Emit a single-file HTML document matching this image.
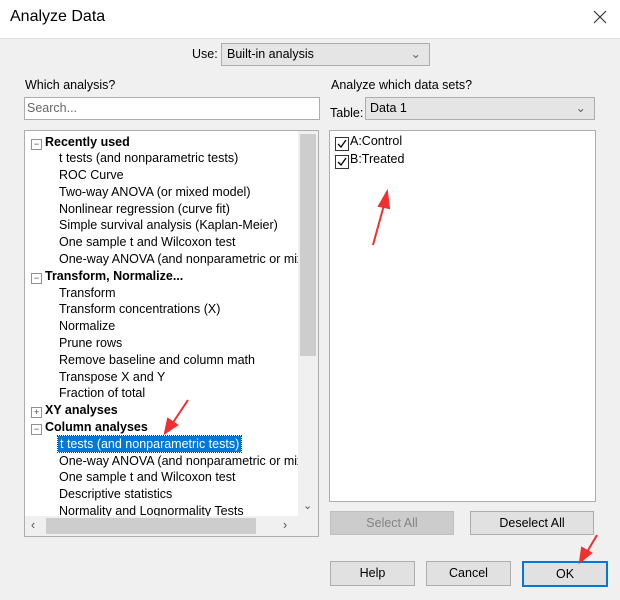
<!DOCTYPE html><html><head><style>
body{margin:0;width:620px;height:600px;background:#f0f0f0;font-family:"Liberation Sans",sans-serif;font-size:12.5px;color:#000;position:relative;overflow:hidden}
.a{position:absolute}
.title{left:0;top:0;width:620px;height:38px;background:#fff;border-bottom:1px solid #e0e0e0}
.box{background:#fff;border:1px solid #adadad}
.combo{background:#e5e5e5;border:1px solid #adadad}
.btn{background:#e1e1e1;border:1px solid #adadad;text-align:center;line-height:22px}
.it{position:absolute;left:34px;white-space:nowrap;line-height:16px}
.h{left:20px;font-weight:bold}
.pm{position:absolute;left:6px;width:9px;height:9px;border:1px solid #919191;background:#fff;font-size:9px;line-height:8px;text-align:center;color:#444}
</style></head><body>
<div class="a title"></div>
<div class="a" style="left:10px;top:8px;font-size:16px">Analyze Data</div>
<svg class="a" style="left:592px;top:9px" width="16" height="16"><path d="M2 2L14 14M14 2L2 14" stroke="#333" stroke-width="1.2"/></svg>
<div class="a" style="left:192px;top:47px">Use:</div>
<div class="a combo" style="left:221px;top:43px;width:207px;height:21px"><span style="position:absolute;left:5px;top:3px">Built-in analysis</span><span style="position:absolute;right:8px;top:2px;color:#666">&#8964;</span></div>
<div class="a" style="left:25px;top:78px">Which analysis?</div>
<div class="a box" style="left:24px;top:97px;width:294px;height:21px"><span style="position:absolute;left:2px;top:3px;color:#666">Search...</span></div>
<div class="a" style="left:331px;top:78px">Analyze which data sets?</div>
<div class="a" style="left:330px;top:106px">Table:</div>
<div class="a combo" style="left:365px;top:97px;width:228px;height:21px"><span style="position:absolute;left:4px;top:3px">Data 1</span><span style="position:absolute;right:8px;top:2px;color:#666">&#8964;</span></div>
<div class="a box" style="left:24px;top:130px;width:293px;height:405px;overflow:hidden">
<div class="pm" style="top:8px">−</div><div class="it h" style="top:3px">Recently used</div>
<div class="it" style="top:19px">t tests (and nonparametric tests)</div>
<div class="it" style="top:36px">ROC Curve</div>
<div class="it" style="top:53px">Two-way ANOVA (or mixed model)</div>
<div class="it" style="top:70px">Nonlinear regression (curve fit)</div>
<div class="it" style="top:86px">Simple survival analysis (Kaplan-Meier)</div>
<div class="it" style="top:103px">One sample t and Wilcoxon test</div>
<div class="it" style="top:120px">One-way ANOVA (and nonparametric or mixed)</div>
<div class="pm" style="top:142px">−</div><div class="it h" style="top:137px">Transform, Normalize...</div>
<div class="it" style="top:154px">Transform</div>
<div class="it" style="top:170px">Transform concentrations (X)</div>
<div class="it" style="top:187px">Normalize</div>
<div class="it" style="top:204px">Prune rows</div>
<div class="it" style="top:221px">Remove baseline and column math</div>
<div class="it" style="top:238px">Transpose X and Y</div>
<div class="it" style="top:254px">Fraction of total</div>
<div class="pm" style="top:276px">+</div><div class="it h" style="top:271px">XY analyses</div>
<div class="pm" style="top:293px">−</div><div class="it h" style="top:288px">Column analyses</div>
<div class="it" style="top:305px;left:33px;background:#0078d7;color:#fff;padding:0 2px;outline:1px dotted #333">t tests (and nonparametric tests)</div>
<div class="it" style="top:322px">One-way ANOVA (and nonparametric or mixed)</div>
<div class="it" style="top:338px">One sample t and Wilcoxon test</div>
<div class="it" style="top:355px">Descriptive statistics</div>
<div class="it" style="top:372px">Normality and Lognormality Tests</div>
<div class="a" style="left:273px;top:0;width:20px;height:386px;background:#f0f0f0"><div style="position:absolute;left:2px;top:3px;width:16px;height:222px;background:#cdcdcd"></div><span style="position:absolute;left:5px;top:368px;color:#555;font-size:11px">&#8964;</span></div>
<div class="a" style="left:0;top:385px;width:293px;height:20px;background:#f0f0f0"><div style="position:absolute;left:21px;top:2px;width:210px;height:16px;background:#cdcdcd"></div><span style="position:absolute;left:6px;top:2px;color:#555">&lsaquo;</span><span style="position:absolute;left:258px;top:2px;color:#555">&rsaquo;</span></div>
</div>
<div class="a box" style="left:329px;top:130px;width:265px;height:370px">
<div class="a" style="left:5px;top:6px;width:12px;height:12px;border:1px solid #333"></div><svg class="a" style="left:6px;top:7px" width="12" height="12"><path d="M2 6L5 9L10 2" stroke="#000" fill="none" stroke-width="1.3"/></svg><div class="a" style="left:20px;top:3px">A:Control</div>
<div class="a" style="left:5px;top:24px;width:12px;height:12px;border:1px solid #333"></div><svg class="a" style="left:6px;top:25px" width="12" height="12"><path d="M2 6L5 9L10 2" stroke="#000" fill="none" stroke-width="1.3"/></svg><div class="a" style="left:20px;top:21px">B:Treated</div>
</div>
<div class="a btn" style="left:330px;top:511px;width:122px;height:22px;background:#cccccc;border-color:#bfbfbf;color:#838383">Select All</div>
<div class="a btn" style="left:470px;top:511px;width:122px;height:22px">Deselect All</div>
<div class="a btn" style="left:330px;top:561px;width:83px;height:23px">Help</div>
<div class="a btn" style="left:426px;top:561px;width:83px;height:23px">Cancel</div>
<div class="a btn" style="left:522px;top:561px;width:82px;height:22px;border:2px solid #0078d7">OK</div>
<svg class="a" style="left:0;top:0" width="620" height="600">
<g fill="#f03030" stroke="#f03030" stroke-width="2">
<path d="M373 245L384 205"/><path d="M387 192L379 206L389 208Z"/>
<path d="M188 400L172 424"/><path d="M165 433L168 419L177 425Z"/>
<path d="M597 535L587 552"/><path d="M580 562L582 548L591 553Z"/>
</g></svg>
</body></html>
